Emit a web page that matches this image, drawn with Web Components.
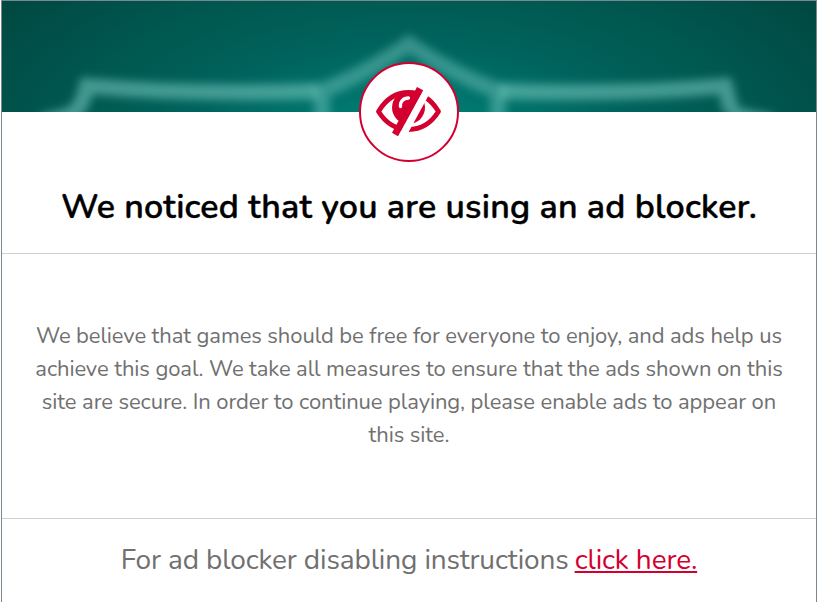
<!DOCTYPE html>
<html lang="en">
<head>
<meta charset="utf-8">
<title>Ad blocker notice</title>
<style>
html,body{margin:0;height:100%;background:#fff;overflow:hidden}
body{font-family:Nunito,"Noto Sans","Liberation Sans",sans-serif}
</style>
</head>
<body>
<notice-dialog>
  <shield-banner slot="banner"><eye-badge></eye-badge></shield-banner>
  <notice-title slot="title">We noticed that you are using an ad blocker.</notice-title>
  <notice-message>We believe that games should be free for everyone to enjoy, and ads help us achieve this goal. We take all measures to ensure that the ads shown on this site are secure. In order to continue playing, please enable ads to appear on this site.</notice-message>
  <notice-footer slot="footer">For ad blocker disabling instructions <help-link slot="link">click here.</help-link></notice-footer>
</notice-dialog>
<script>
const define = (name, html) => customElements.define(name, class extends HTMLElement {
  constructor() {
    super();
    this.attachShadow({mode: 'open'}).innerHTML = html;
  }
});

define('notice-dialog', `<style>
:host{display:flex;flex-direction:column;box-sizing:border-box;height:602px;width:816px;margin-left:1px;border:1px solid #7b8890;border-bottom:0;background:#fff}
</style><slot name="banner"></slot><slot name="title"></slot><slot></slot><slot name="footer"></slot>`);

define('shield-banner', `<style>
:host{display:block;position:relative;flex:none;height:111px}
svg{display:block;width:100%;height:111px}
::slotted(eye-badge){position:absolute;left:357px;top:61px}
</style>
<svg viewBox="2 1 814 111" preserveAspectRatio="none">
<defs>
<radialGradient id="g" gradientUnits="userSpaceOnUse" cx="0" cy="0" r="1" gradientTransform="translate(409 150) scale(500 240)">
<stop offset="0" stop-color="#00857a"/><stop offset=".2" stop-color="#00786f"/><stop offset=".45" stop-color="#00635d"/><stop offset=".7" stop-color="#005850"/><stop offset="1" stop-color="#004942"/>
</radialGradient>
<filter id="b" filterUnits="userSpaceOnUse" x="-20" y="0" width="860" height="160"><feGaussianBlur stdDeviation="4.500"/></filter>
</defs>
<rect x="2" y="1" width="814" height="111" fill="url(#g)"/>
<g fill="none" stroke="#80cfc7" stroke-width="16" filter="url(#b)">
<path stroke-opacity=".53" d="M42 122Q68 117 75 112Q83 104 87 86Q190 95 318 91M731 112Q730 104 725 86Q625 95 500 91M731 112Q738 117 772 122"/>
<path stroke-opacity=".42" d="M322 128V91Q368 73 409 44Q450 73 498 91V128"/>
</g></svg><slot></slot>`);

define('eye-badge', `<style>
:host{display:block;width:100px;height:100px}svg{display:block}
</style><svg width="100" height="100" viewBox="359 62 100 100">
<circle cx="409" cy="112" r="49" fill="#fff" stroke="#d3002f" stroke-width="2"/>
<path d="M378.5 111.5C386 99 397 92.5 408.5 92.5S431 99 438.500 111.500C431 123.500 420 129.500 408.500 129.500S386 123.500 378.500 111.500Z" fill="none" stroke="#d3002f" stroke-width="4.800" stroke-linejoin="round"/>
<circle cx="408.500" cy="107.500" r="16.500" fill="#d3002f"/>
<path d="M400.500 106.500C400 101.500 403.500 98 408.500 98" fill="none" stroke="#fff" stroke-width="3.300" stroke-linecap="round"/>
<path d="M423.500 89L431.500 90L406.500 136H398Z" fill="#fff"/>
<path d="M417 87L423.200 90.200L398 136.200L392 132.800Z" fill="#d3002f"/>
</svg>`);

define('notice-title', `<style>
:host{display:flex;flex:none;box-sizing:border-box;height:142px;padding-top:49px;justify-content:center;border-bottom:1px solid #cfcfcf;color:#000;font-weight:600;-webkit-text-stroke:.4px #000;font-size:34px;line-height:92px;letter-spacing:.19px;white-space:nowrap}
</style><span><slot></slot></span>`);

define('notice-message', `<style>
:host{display:block;flex:none;box-sizing:border-box;height:265px;padding:66px 30px 0;text-align:center;border-bottom:1px solid #cfcfcf;color:#707070;font-size:22px;line-height:33px;letter-spacing:-.09px}
</style><slot></slot>`);

define('notice-footer', `<style>
:host{display:flex;flex:1;justify-content:center;align-items:flex-start;padding-top:20px;gap:6px;color:#707070;font-size:28px;line-height:42px;white-space:nowrap;letter-spacing:-.12px}
</style><span><slot></slot></span><slot name="link"></slot>`);

define('help-link', `<style>
:host{display:block}a{color:#d3002f;text-decoration:underline;text-decoration-thickness:2px;text-underline-offset:2px;text-decoration-skip-ink:none;cursor:pointer}
</style><a><slot></slot></a>`);
</script>
</body>
</html>
